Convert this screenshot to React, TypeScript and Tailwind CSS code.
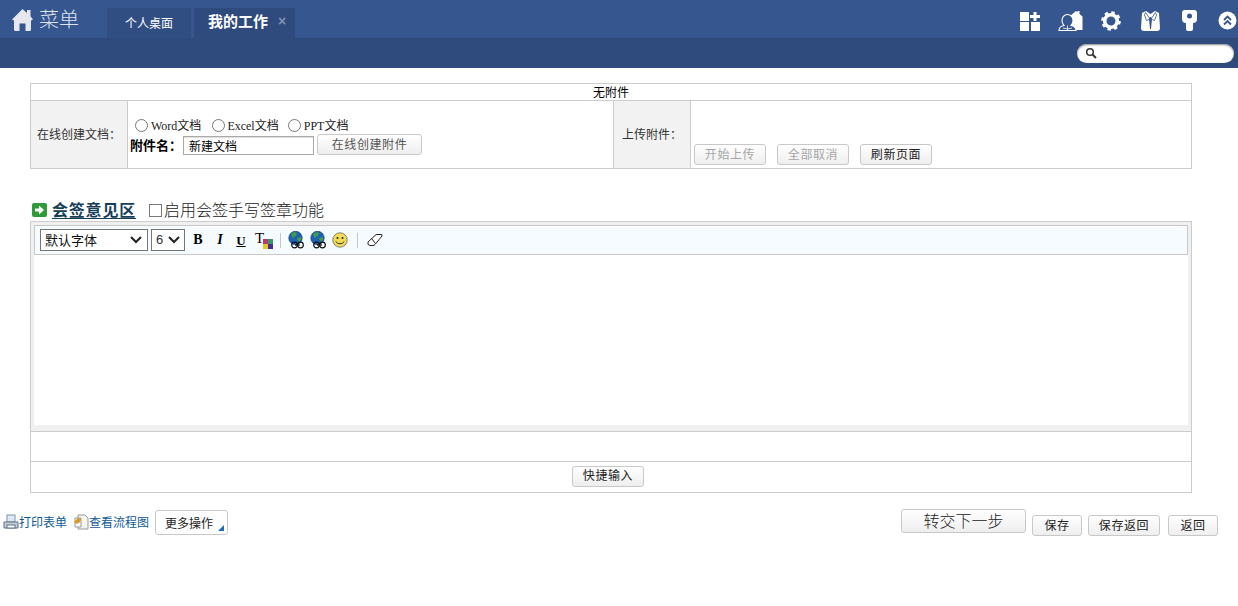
const cjk = { fontFamily: '"Noto Sans CJK SC", "Liberation Sans", sans-serif' };

function Btn({ w, h = 'h-[21px]', disabled, big, children, className = '' }: any) {
  return (
    <button
      className={`${w} ${h} shrink-0 rounded-[3px] border border-[#c8c8c8] bg-gradient-to-b from-white to-[#eeeeee] pb-[2px] ${big ? 'text-[16px] font-light' : 'text-[12px] tracking-[0.6px]'} leading-none ${disabled ? 'text-[#a6a6a6]' : 'text-[#222]'} ${className}`}
    >
      {children}
    </button>
  );
}

function HomeIcon() {
  return (
    <svg width="21" height="23" viewBox="0 0 21 23" fill="#e6e8ee">
      <path d="M10.500 1 L15 5 V2 H18.500 V8.200 L21 11.500 L19 12.500 V21.500 Q19 23 17.500 23 H13.500 V15.500 H7.500 V23 H3.500 Q2 23 2 21.500 V12.500 L0 11.500 Z" />
    </svg>
  );
}

function TopIcons() {
  return (
    <div className="flex items-center">
      <svg width="20" height="20" viewBox="0 0 20 20" fill="#fff">
        <rect x="0" y="1" width="9" height="9" /><rect x="0" y="11" width="9" height="9" /><rect x="11" y="11" width="9" height="9" />
        <path d="M13.500 1h3v3h3.500v3h-3.500v3h-3V7H10V4h3.500z" />
      </svg>
      <svg width="25" height="20" viewBox="0 0 25 20" className="ml-[18px]">
        <path d="M12 5l6-5 1.500 1.200V0h2v3l3 2.500V19H12z" fill="#fff" />
        <path d="M1 19.500c0-3 2.500-4.500 5-5-1.500-1.500-2-3-2-5 0-3 2-6 5.500-6s5.500 3 5.500 6c0 2-.5 3.500-2 5 2.500.5 5 2 5 5z" fill="#36568f" stroke="#fff" strokeWidth="1.100" />
        <path d="M9.500 14.500v5M5 17l4.500 1 4.500-1" stroke="#fff" strokeWidth="0.800" fill="none" />
      </svg>
      <svg width="20" height="20" viewBox="0 0 20 20" className="ml-[18px]">
        <circle cx="10" cy="10" r="6.300" fill="none" stroke="#fff" strokeWidth="3.600" />
        <circle cx="10" cy="10" r="8.300" fill="none" stroke="#fff" strokeWidth="3" strokeDasharray="3.300 3.220" />
      </svg>
      <svg width="19" height="20" viewBox="0 0 19 20" className="ml-[20px]">
        <path d="M5 0l4.500 3L14 0l4 2 1 15c0 2-1 3-3 3H3c-2 0-3-1-3-3L1 2z" fill="#fff" />
        <path d="M4.500 1.500L9 8 5.500 9.500 3.500 4zM14.500 1.500L10 8l3.500 1.500 2-5.500z" fill="#fff" stroke="#36568f" strokeWidth="0.800" />
        <path d="M9 6h1l1 2-1 10H9L8 8z" fill="#36568f" />
      </svg>
      <svg width="15" height="21" viewBox="0 0 15 21" className="ml-[22px]">
        <path d="M3 0h9a3 3 0 0 1 3 3v6a4 4 0 0 1-4 4v6a2 2 0 0 1-2 2H6a2 2 0 0 1-2-2v-6a4 4 0 0 1-4-4V3a3 3 0 0 1 3-3z" fill="#fff" />
        <circle cx="7.500" cy="6" r="2.500" fill="#36568f" />
      </svg>
      <svg width="19" height="19" viewBox="0 0 19 19" className="ml-[21px]">
        <circle cx="9.500" cy="9.500" r="9" fill="#fff" />
        <path d="M6 9l3.500-3.500L13 9M6 13.500L9.500 10l3.500 3.500" fill="none" stroke="#36568f" strokeWidth="1.800" />
      </svg>
    </div>
  );
}

function Globe() {
  return (
    <svg width="17" height="18" viewBox="0 0 17 18">
      <circle cx="7.500" cy="7" r="6.700" fill="#1f5fb4" stroke="#123a70" strokeWidth="0.700" />
      <path d="M3 3c2-2 5-2 6-1l-1 3-2 .5L5 8zM9 7l4-1 .5 2-2 3-2-2z" fill="#3f9e4a" />
      <circle cx="6.500" cy="14" r="2.800" fill="none" stroke="#111" strokeWidth="1.200" />
      <circle cx="12.500" cy="14" r="2.800" fill="none" stroke="#111" strokeWidth="1.200" />
      <path d="M7 14h5" stroke="#111" strokeWidth="1.200" />
    </svg>
  );
}

function Toolbar() {
  return (
    <div className="flex h-[30px] items-center border border-[#c8c8c8] bg-[#f5fbff] pl-[5px]">
      <div className="flex h-[22px] w-[108px] items-center justify-between border border-[#767676] bg-white pl-[4px] pr-[5px] text-[13px] text-[#111]">
        <span>默认字体</span>
        <svg width="12" height="8" viewBox="0 0 12 8"><path d="M1 1l5 5 5-5" fill="none" stroke="#222" strokeWidth="2" /></svg>
      </div>
      <div className="ml-[3px] flex h-[22px] w-[34px] items-center justify-between border border-[#767676] bg-white pl-[4px] pr-[4px] text-[13px] text-[#333]" style={{ fontFamily: '"Liberation Sans", sans-serif' }}>
        <span>6</span>
        <svg width="12" height="8" viewBox="0 0 12 8"><path d="M1 1l5 5 5-5" fill="none" stroke="#222" strokeWidth="2" /></svg>
      </div>
      <div className="ml-[7px] flex items-center leading-none text-black" style={{ fontFamily: '"Liberation Serif", serif' }}>
        <span className="w-[12px] text-center text-[14px] font-bold">B</span>
        <span className="ml-[10px] w-[12px] text-center text-[14px] font-bold italic">I</span>
        <span className="ml-[9px] w-[12px] text-center text-[13px] font-bold underline">U</span>
        <span className="relative ml-[8px] h-[18px] w-[18px]">
          <span className="absolute left-0 top-0 text-[15px]">T</span>
          <svg width="10" height="10" viewBox="0 0 10 10" className="absolute bottom-0 right-0">
            <rect width="5" height="5" fill="#b83a6a" /><rect x="5" width="5" height="5" fill="#2f9a6a" />
            <rect y="5" width="5" height="5" fill="#e4c92a" /><rect x="5" y="5" width="5" height="5" fill="#4a2a9a" />
          </svg>
        </span>
      </div>
      <div className="ml-[7px] h-[15px] w-px bg-[#c4c8cc]" />
      <div className="ml-[7px] flex items-center gap-[5px]">
        <Globe />
        <Globe />
        <svg width="16" height="16" viewBox="0 0 16 16">
          <circle cx="8" cy="8" r="7.200" fill="#f2dc55" stroke="#666" strokeWidth="0.800" />
          <circle cx="5.500" cy="6" r="1" fill="#222" /><circle cx="10.500" cy="6" r="1" fill="#222" />
          <path d="M4 9.500c1 3 7 3 8 0" fill="none" stroke="#222" />
        </svg>
      </div>
      <div className="ml-[9px] h-[15px] w-px bg-[#c4c8cc]" />
      <svg width="16" height="12" viewBox="0 0 16 12" className="ml-[9px]">
        <path d="M1 8L8 1.500Q9 .5 10 .5h4q1.500 0 1 1.500L8 10.500Q7 11.500 6 11.500H3Q0 11 1 8z" fill="#fff" stroke="#222" />
        <path d="M4.500 4.500l4 5" stroke="#222" />
      </svg>
    </div>
  );
}

const serifMix = { fontFamily: '"Liberation Serif", "Noto Sans CJK SC", serif' };

export default function App() {
  return (
    <div className="h-[606px] w-[1238px] overflow-hidden bg-white text-[12px] text-black" style={cjk}>
      <header className="h-[68px]">
        <div className="flex h-[38px] items-end bg-[#36568f]">
          <div className="flex h-[38px] w-[107px] items-center pl-[12px]">
            <HomeIcon />
            <span className="ml-[6px] text-[20px] font-light leading-none text-[#dfe3ec]">菜单</span>
          </div>
          <div className="flex h-[30px] w-[84px] items-center justify-center bg-[#314e83] text-[12px] text-white">个人桌面</div>
          <div className="relative ml-[3px] flex h-[30px] w-[101px] items-center bg-[#2f4a7c] pb-[3px] pl-[14px] text-[15px] font-bold text-white">
            我的工作
            <span className="absolute left-[84px] top-[3px] text-[14px] font-bold text-[#7f90b2]" style={{ fontFamily: '"Liberation Sans", sans-serif' }}>×</span>
          </div>
          <div className="ml-auto flex h-[38px] items-center pr-[1px] pt-[3px]">
            <TopIcons />
          </div>
        </div>
        <div className="flex h-[30px] items-center justify-end bg-[#2f4a7c] pr-[4px]">
          <div className="flex h-[19px] w-[157px] items-center rounded-full bg-white pl-[8px] shadow-[inset_0_1px_2px_#888]">
            <svg width="12" height="12" viewBox="0 0 12 12"><circle cx="5" cy="5" r="3.300" fill="none" stroke="#333" strokeWidth="1.500" /><path d="M7.500 7.500L11 11" stroke="#333" strokeWidth="2" /></svg>
          </div>
        </div>
      </header>

      <main className="ml-[30px] mt-[15px] w-[1162px]">
        <section className="border border-[#cccccc]">
          <div className="flex h-[17px] items-center justify-center border-b border-[#cccccc] text-[12px] text-black">无附件</div>
          <div className="flex h-[67px]">
            <div className="flex w-[97px] shrink-0 items-center justify-center border-r border-[#cccccc] bg-[#f2f2f2] pb-[2px] text-[12px] text-[#333]">在线创建文档：</div>
            <div className="w-[486px] shrink-0 border-r border-[#cccccc] pl-[2px] pt-[16px]">
              <div className="flex h-[17px] items-center pl-[5px] text-[12px] text-[#222]">
                <span className="h-[13px] w-[13px] rounded-full border border-[#777] bg-white" />
                <span className="ml-[3px]" style={serifMix}>Word文档</span>
                <span className="ml-[11px] h-[13px] w-[13px] rounded-full border border-[#777] bg-white" />
                <span className="ml-[2px]" style={serifMix}>Excel文档</span>
                <span className="ml-[9px] h-[13px] w-[13px] rounded-full border border-[#777] bg-white" />
                <span className="ml-[3px]" style={serifMix}>PPT文档</span>
              </div>
              <div className="flex items-start">
                <span className="mt-[4px] w-[53px] text-[13px] font-bold leading-none">附件名：</span>
                <div className="mt-[2px] flex h-[19px] w-[131px] items-center border border-[#aaaaaa] bg-white pl-[5px] text-[12px] shadow-[inset_0_1px_1px_#ddd]">新建文档</div>
                <Btn w="w-[105px]" className="ml-[3px] !text-[#555]">在线创建附件</Btn>
              </div>
            </div>
            <div className="flex w-[77px] shrink-0 items-center justify-center border-r border-[#cccccc] bg-[#f2f2f2] pb-[2px] text-[12px] text-[#333]">上传附件：</div>
            <div className="flex flex-1 items-end pb-[3px] pl-[3px]">
              <Btn w="w-[72px]" disabled>开始上传</Btn>
              <Btn w="w-[72px]" disabled className="ml-[11px]">全部取消</Btn>
              <Btn w="w-[72px]" className="ml-[11px]">刷新页面</Btn>
            </div>
          </div>
        </section>

        <div className="mb-[1px] mt-[31px] flex h-[20px] items-center pl-[2px]">
          <svg width="15" height="14" viewBox="0 0 15 14">
            <rect width="15" height="14" rx="2" fill="#2f9a3a" />
            <path d="M3 5.500h4V2.500L12 7l-5 4.500v-3H3z" fill="#fff" />
          </svg>
          <span className="ml-[5px] mb-[2px] border-b border-[#16405a] text-[16px] font-bold leading-[18px] tracking-[0.8px] text-[#16405a]">会签意见区</span>
          <span className="ml-[13px] h-[13px] w-[13px] border border-[#777] bg-white" />
          <span className="mb-[2px] ml-[2px] text-[16px] font-light leading-none text-[#222]">启用会签手写签章功能</span>
        </div>

        <section className="border border-[#cccccc]">
          <div className="h-[209px] bg-[#f0f0f0] px-[3px] pb-[6px] pt-[3px]">
            <Toolbar />
            <div className="h-[170px] bg-white" />
          </div>
          <div className="h-[30px] border-t border-[#cccccc]" />
          <div className="flex h-[31px] items-center justify-center border-t border-[#cccccc] pb-[2px] pr-[6px]">
            <Btn w="w-[72px]">快捷输入</Btn>
          </div>
        </section>
      </main>

      <footer className="mt-[17px] flex w-[1238px] items-start pl-[3px]">
        <div className="flex items-start text-[12px] text-[#0f5a94]">
          <svg width="16" height="16" viewBox="0 0 16 16" className="mt-[4px]">
            <rect x="4" y="1" width="8" height="7" fill="#dce8f4" stroke="#7e94a8" />
            <path d="M1 8h14v6H1z" fill="#c4ced8" stroke="#5d7186" />
            <rect x="4" y="11" width="8" height="3" fill="#fff" stroke="#5d7186" />
          </svg>
          <span className="mt-[3px]">打印表单</span>
          <svg width="16" height="16" viewBox="0 0 16 16" className="ml-[6px] mt-[4px]">
            <path d="M5 1h7l3 3v11H5z" fill="#f4f4f0" stroke="#999" />
            <path d="M2 4h6v9H2z" fill="#f9f9f6" stroke="#999" />
            <path d="M1 8l4-4 3 1-1 3-3 2z" fill="#d79a22" />
          </svg>
          <span className="mt-[3px]">查看流程图</span>
          <div className="relative ml-[6px] flex h-[25px] w-[73px] items-center rounded-[3px] border border-[#c8c8c8] bg-white pl-[9px] text-[12px] text-[#222]">
            更多操作
            <span className="absolute bottom-[3px] right-[3px] h-0 w-0 border-b-[6px] border-l-[6px] border-b-[#1e6fb8] border-l-transparent" />
          </div>
        </div>
        <div className="ml-auto flex items-start pr-[20px]">
          <Btn w="w-[125px]" h="h-[24px]" big className="-mt-[1px]">转交下一步</Btn>
          <Btn w="w-[50px]" className="ml-[6px] mt-[5px]">保存</Btn>
          <Btn w="w-[72px]" className="ml-[6px] mt-[5px]">保存返回</Btn>
          <Btn w="w-[50px]" className="ml-[8px] mt-[5px]">返回</Btn>
        </div>
      </footer>
    </div>
  );
}
